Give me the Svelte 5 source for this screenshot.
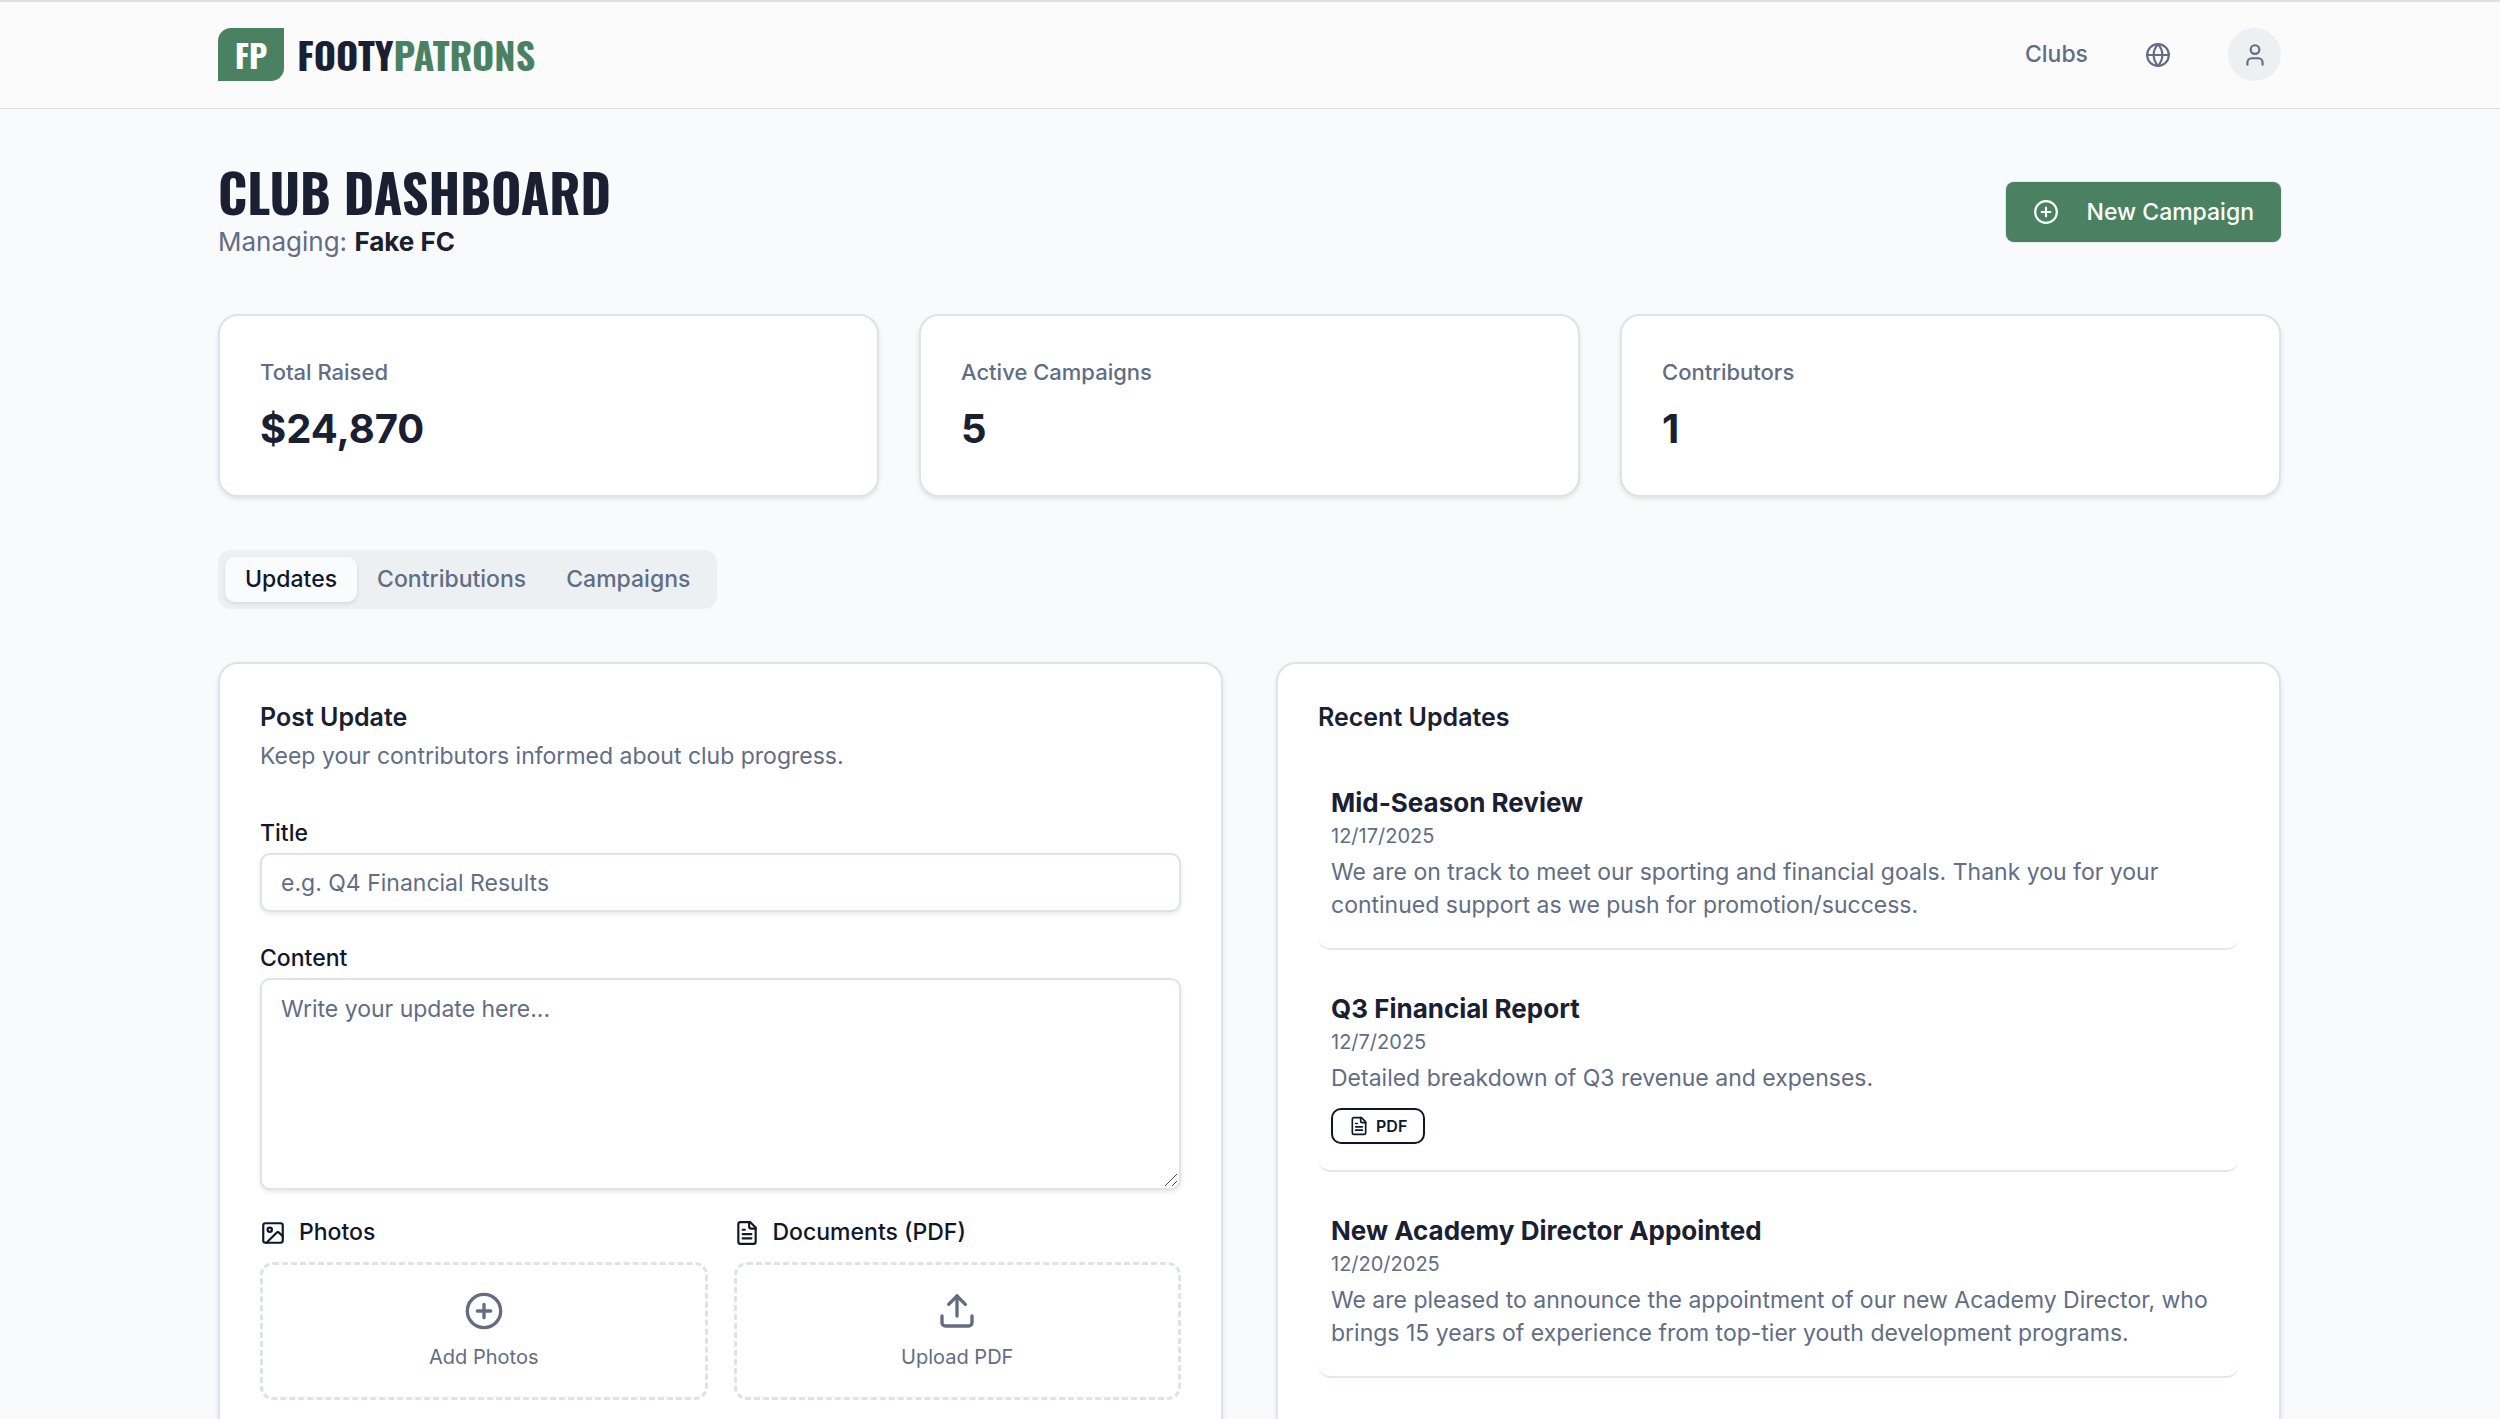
<script>
  const stats = [
    { label: 'Total Raised', value: '$24,870' },
    { label: 'Active Campaigns', value: '5' },
    { label: 'Contributors', value: '1' },
  ];

  const tabs = ['Updates', 'Contributions', 'Campaigns'];
  let activeTab = $state('Updates');

  let title = $state('');
  let content = $state('');

  const updates = [
    {
      title: 'Mid-Season Review',
      date: '12/17/2025',
      text: 'We are on track to meet our sporting and financial goals. Thank you for your continued support as we push for promotion/success.',
      pdf: false,
    },
    {
      title: 'Q3 Financial Report',
      date: '12/7/2025',
      text: 'Detailed breakdown of Q3 revenue and expenses.',
      pdf: true,
    },
    {
      title: 'New Academy Director Appointed',
      date: '12/20/2025',
      text: 'We are pleased to announce the appointment of our new Academy Director, who brings 15 years of experience from top-tier youth development programs.',
      pdf: false,
    },
  ];
</script>

{#snippet plusCircle(cls)}
  <svg class={cls} viewBox="0 0 24 24" aria-hidden="true">
    <circle cx="12" cy="12" r="10" />
    <path d="M8 12h8M12 8v8" />
  </svg>
{/snippet}

{#snippet fileText(cls)}
  <svg class={cls} viewBox="0 0 24 24" aria-hidden="true">
    <path d="M15 2H6a2 2 0 0 0-2 2v16a2 2 0 0 0 2 2h12a2 2 0 0 0 2-2V7Z" />
    <path d="M14 2v4a2 2 0 0 0 2 2h4" />
    <path d="M10 9H8M16 13H8M16 17H8" />
  </svg>
{/snippet}

<div class="page">
  <header class="topbar">
    <div class="container topbar-row">
      <a class="brand" href="/">
        <span class="brand-mark">FP</span>
        <span class="brand-name">FOOTY<span class="brand-accent">PATRONS</span></span>
      </a>
      <nav class="nav">
        <a class="nav-link" href="/clubs">Clubs</a>
        <button class="icon-button" type="button" aria-label="Language">
          <svg class="icon icon-md" viewBox="0 0 24 24" aria-hidden="true">
            <circle cx="12" cy="12" r="10" />
            <path d="M12 2a14.5 14.5 0 0 0 0 20 14.5 14.5 0 0 0 0-20" />
            <path d="M2 12h20" />
          </svg>
        </button>
        <button class="icon-button avatar" type="button" aria-label="Account">
          <svg class="icon icon-md" viewBox="0 0 24 24" aria-hidden="true">
            <path d="M19 21v-2a4 4 0 0 0-4-4H9a4 4 0 0 0-4 4v2" />
            <circle cx="12" cy="7" r="4" />
          </svg>
        </button>
      </nav>
    </div>
  </header>

  <main class="container main">
    <section class="heading">
      <div>
        <h1>CLUB DASHBOARD</h1>
        <p class="managing">Managing: <strong>Fake FC</strong></p>
      </div>
      <button class="primary" type="button">
        {@render plusCircle('icon icon-md')}
        New Campaign
      </button>
    </section>

    <section class="stats">
      {#each stats as stat}
        <div class="card stat">
          <span class="stat-label">{stat.label}</span>
          <span class="stat-value">{stat.value}</span>
        </div>
      {/each}
    </section>

    <div class="tabs" role="tablist">
      {#each tabs as tab}
        <button
          class="tab"
          class:active={tab === activeTab}
          type="button"
          role="tab"
          aria-selected={tab === activeTab}
          onclick={() => (activeTab = tab)}>{tab}</button>
      {/each}
    </div>

    <div class="panels">
      <section class="card panel">
        <h2>Post Update</h2>
        <p class="panel-note">Keep your contributors informed about club progress.</p>
        <form class="form">
          <div class="field">
            <label for="title">Title</label>
            <input id="title" type="text" placeholder="e.g. Q4 Financial Results" bind:value={title} />
          </div>
          <div class="field">
            <label for="content">Content</label>
            <div class="textarea-wrap">
              <textarea id="content" placeholder="Write your update here..." bind:value={content}></textarea>
              <svg class="grip" viewBox="0 0 14 14" aria-hidden="true">
                <path d="M1 13 13 1M8 13l5-5" />
              </svg>
            </div>
          </div>
          <div class="uploads">
            <div class="upload">
              <label class="upload-label" for="photos">
                <svg class="icon icon-md" viewBox="0 0 24 24" aria-hidden="true">
                  <rect x="3" y="3" width="18" height="18" rx="2" />
                  <circle cx="9" cy="9" r="2" />
                  <path d="m21 15-3.086-3.086a2 2 0 0 0-2.828 0L6 21" />
                </svg>
                Photos
              </label>
              <button id="photos" class="dropzone" type="button">
                {@render plusCircle('icon icon-lg')}
                Add Photos
              </button>
            </div>
            <div class="upload">
              <label class="upload-label" for="documents">
                {@render fileText('icon icon-md')}
                Documents (PDF)
              </label>
              <button id="documents" class="dropzone" type="button">
                <svg class="icon icon-lg" viewBox="0 0 24 24" aria-hidden="true">
                  <path d="M12 3v12" />
                  <path d="m17 8-5-5-5 5" />
                  <path d="M21 15v4a2 2 0 0 1-2 2H5a2 2 0 0 1-2-2v-4" />
                </svg>
                Upload PDF
              </button>
            </div>
          </div>
        </form>
      </section>

      <section class="card panel">
        <h2>Recent Updates</h2>
        <div class="updates">
          {#each updates as update}
            <article class="update">
              <h3>{update.title}</h3>
              <time>{update.date}</time>
              <p>{update.text}</p>
              {#if update.pdf}
                <a class="badge" href="/q3-report.pdf">
                  {@render fileText('icon icon-sm')}
                  PDF
                </a>
              {/if}
            </article>
          {/each}
        </div>
      </section>
    </div>
  </main>
</div>

<style>
  :global(body) {
    margin: 0;
    background: #f9fafc;
  }

  .page {
    --ink: #1a2031;
    --muted: #626d84;
    --line: #dfe3e9;
    --green: #4a8261;
    --soft: #ecf0f3;
    --shadow: 0 2px 4px rgba(15, 23, 42, 0.1);
    --display: Oswald, 'Liberation Sans Narrow', 'Liberation Sans', sans-serif;
    box-sizing: border-box;
    height: 100vh;
    overflow: hidden;
    border-top: 2px solid #e0e0e0;
    color: var(--ink);
    font-family: Inter, 'Liberation Sans', sans-serif;
    font-size: 23px;
    line-height: 33px;
  }

  .page :global(*) {
    box-sizing: border-box;
  }

  h1,
  h2,
  h3,
  p {
    margin: 0;
  }

  a {
    color: inherit;
    text-decoration: none;
  }

  button,
  input,
  textarea {
    font: inherit;
    color: inherit;
  }

  button {
    padding: 0;
    border: 0;
    background: none;
    cursor: pointer;
  }

  .icon {
    flex: none;
    fill: none;
    stroke: currentColor;
    stroke-width: 2;
    stroke-linecap: round;
    stroke-linejoin: round;
  }

  .icon-sm {
    width: 20px;
    height: 20px;
  }

  .icon-md {
    width: 26px;
    height: 26px;
  }

  .icon-lg {
    width: 40px;
    height: 40px;
  }

  .container {
    width: 100%;
    max-width: 2116px;
    margin: 0 auto;
    padding: 0 27px 0 26px;
  }

  .topbar {
    border-bottom: 1px solid #d8dfe7;
    background: #fbfbfb;
  }

  .topbar-row {
    display: flex;
    align-items: center;
    justify-content: space-between;
    padding-top: 26px;
    padding-bottom: 27px;
  }

  .brand {
    display: flex;
    align-items: center;
    gap: 13px;
    font-family: var(--display);
    font-weight: 700;
    color: var(--ink);
  }

  .brand-mark {
    padding: 0 17px;
    border-radius: 13px 0;
    background: var(--green);
    color: #fff;
    font-size: 32px;
    line-height: 53px;
  }

  .brand-name {
    font-size: 38px;
    line-height: 53px;
  }

  .brand-accent {
    color: var(--green);
  }

  .nav {
    display: flex;
    align-items: center;
    gap: 57px;
    color: var(--muted);
    font-weight: 500;
  }

  .icon-button {
    display: flex;
    align-items: center;
    justify-content: center;
  }

  .avatar {
    width: 53px;
    height: 53px;
    border-radius: 50%;
    background: var(--soft);
  }

  .main {
    padding-top: 53px;
  }

  .heading {
    display: flex;
    align-items: center;
    justify-content: space-between;
    margin-bottom: 52px;
  }

  h1 {
    font-family: var(--display);
    font-size: 52px;
    font-weight: 700;
    line-height: 60px;
  }

  .managing {
    color: var(--muted);
    font-size: 26px;
    line-height: 40px;
  }

  .managing strong {
    color: var(--ink);
    font-weight: 700;
  }

  .primary {
    display: flex;
    align-items: center;
    gap: 28px;
    height: 60px;
    padding: 0 27px;
    border-radius: 8px;
    background: var(--green);
    box-shadow: 0 0 2px rgba(15, 23, 42, 0.25);
    color: #fff;
    font-weight: 500;
  }

  .card {
    border: 2px solid var(--line);
    border-radius: 20px;
    background: #fff;
    box-shadow: var(--shadow);
  }

  .stats {
    display: grid;
    grid-template-columns: repeat(3, 1fr);
    gap: 40px;
    margin-bottom: 53px;
  }

  .stat {
    display: flex;
    flex-direction: column;
    gap: 13px;
    padding: 40px;
  }

  .stat-label {
    color: var(--muted);
    font-size: 22px;
    font-weight: 500;
  }

  .stat-value {
    font-size: 40px;
    font-weight: 700;
    line-height: 53px;
  }

  .tabs {
    display: flex;
    width: fit-content;
    padding: 7px;
    border-radius: 13px;
    background: var(--soft);
  }

  .tab {
    padding: 6px 20px;
    border-radius: 10px;
    color: var(--muted);
    font-weight: 500;
  }

  .tab.active {
    background: #fafbfc;
    box-shadow: var(--shadow);
    color: #0f172a;
  }

  .panels {
    display: grid;
    grid-template-columns: repeat(2, 1fr);
    gap: 53px;
    margin-top: 53px;
  }

  .panel {
    padding: 40px 40px 80px;
  }

  h2 {
    font-size: 25px;
    font-weight: 600;
    line-height: 26px;
  }

  .panel-note {
    margin-top: 10px;
    color: var(--muted);
  }

  .form {
    display: flex;
    flex-direction: column;
    gap: 26px;
    margin-top: 40px;
  }

  .field {
    display: flex;
    flex-direction: column;
  }

  label {
    color: #0f172a;
    font-weight: 500;
    line-height: 40px;
  }

  input,
  textarea {
    width: 100%;
    border: 2px solid var(--line);
    border-radius: 10px;
    background: #fff;
    box-shadow: var(--shadow);
    outline: none;
  }

  input {
    height: 59px;
    padding: 0 19px;
  }

  .textarea-wrap {
    position: relative;
  }

  textarea {
    display: block;
    height: 212px;
    padding: 13px 19px;
    resize: vertical;
  }

  textarea::-webkit-resizer {
    background: transparent;
  }

  .grip {
    position: absolute;
    right: 3px;
    bottom: 3px;
    width: 14px;
    height: 14px;
    fill: none;
    stroke: #4b4b4b;
    stroke-width: 1;
    pointer-events: none;
  }

  input::placeholder,
  textarea::placeholder {
    color: var(--muted);
    opacity: 1;
  }

  .uploads {
    display: grid;
    grid-template-columns: repeat(2, 1fr);
    gap: 26px;
  }

  .upload {
    display: flex;
    flex-direction: column;
    gap: 13px;
  }

  .upload-label {
    display: flex;
    align-items: center;
    gap: 13px;
    line-height: 33px;
  }

  .dropzone {
    display: flex;
    flex-direction: column;
    align-items: center;
    gap: 13px;
    padding: 26px;
    border: 3px dashed var(--line);
    border-radius: 13px;
    color: var(--muted);
    font-size: 20px;
    line-height: 27px;
  }

  .updates {
    display: flex;
    flex-direction: column;
    gap: 26px;
    margin-top: 40px;
  }

  .update {
    display: flex;
    flex-direction: column;
    align-items: flex-start;
    padding: 13px 13px 26px;
    border-bottom: 2px solid #e4e8ed;
    border-radius: 13px;
  }

  h3 {
    font-size: 26px;
    font-weight: 700;
    line-height: 40px;
  }

  time {
    color: var(--muted);
    font-size: 20px;
    line-height: 26px;
  }

  .update p {
    margin-top: 7px;
    color: var(--muted);
  }

  .badge {
    display: flex;
    align-items: center;
    gap: 7px;
    margin-top: 13px;
    padding: 3px 16px;
    border: 2px solid #0f172a;
    border-radius: 10px;
    color: #0f172a;
    font-size: 16px;
    font-weight: 600;
    line-height: 26px;
  }
</style>
